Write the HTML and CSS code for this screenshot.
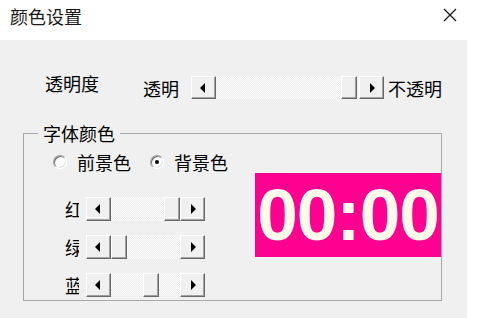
FILE: index.html
```html
<!DOCTYPE html>
<html lang="zh-CN">
<head>
    <meta charset="UTF-8">
    <title>颜色设置</title>
    <link rel="stylesheet" href="styles.css">
</head>
<body>
    <div class="window">
        <!-- Barra de título -->
        <div class="titlebar">
            <span class="title">颜色设置</span>
            <svg class="close" viewBox="0 0 14 14"><path d="M1 1L13 13M13 1L1 13" stroke="#111" stroke-width="1.2" fill="none"/></svg>
        </div>

        <div class="client">
            <!-- Transparencia -->
            <div class="opacity-row">
                <span class="opacity-label">透明度</span>
                <span class="end-label">透明</span>
                <div class="scrollbar wide">
                    <span class="sb-btn"><i class="arrow-left"></i></span>
                    <span class="sb-track"><span class="sb-thumb" style="margin-left:125px"></span></span>
                    <span class="sb-btn"><i class="arrow-right"></i></span>
                </div>
                <span class="end-label after">不透明</span>
            </div>

            <!-- Color de fuente -->
            <fieldset class="group">
                <legend>字体颜色</legend>
                <div class="group-body">
                    <div class="controls">
                        <div class="radio-row">
                            <label class="radio"><span class="radio-dot"></span>前景色</label>
                            <label class="radio"><span class="radio-dot checked"></span>背景色</label>
                        </div>
                        <div class="color-row first">
                            <span class="color-label">红</span>
                            <div class="scrollbar small">
                                <span class="sb-btn"><i class="arrow-left"></i></span>
                                <span class="sb-track"><span class="sb-thumb" style="margin-left:53px"></span></span>
                                <span class="sb-btn"><i class="arrow-right"></i></span>
                            </div>
                        </div>
                        <div class="color-row">
                            <span class="color-label">绿</span>
                            <div class="scrollbar small">
                                <span class="sb-btn"><i class="arrow-left"></i></span>
                                <span class="sb-track"><span class="sb-thumb" style="margin-left:0px"></span></span>
                                <span class="sb-btn"><i class="arrow-right"></i></span>
                            </div>
                        </div>
                        <div class="color-row">
                            <span class="color-label">蓝</span>
                            <div class="scrollbar small">
                                <span class="sb-btn"><i class="arrow-left"></i></span>
                                <span class="sb-track"><span class="sb-thumb" style="margin-left:32px"></span></span>
                                <span class="sb-btn"><i class="arrow-right"></i></span>
                            </div>
                        </div>
                    </div>
                    <div class="preview">00:00</div>
                </div>
            </fieldset>
        </div>
    </div>
</body>
</html>
```

FILE: styles.css
```css
body {
    margin: 0;
    background-color: #fff;
    font-family: "Noto Sans CJK SC", sans-serif;
    font-size: 18px;
    color: #000;
}

.window {
    width: 483px;
    height: 318px;
    display: flex;
    flex-direction: column;
}

.titlebar {
    height: 40px;
    flex-shrink: 0;
    display: flex;
    justify-content: space-between;
    align-items: flex-start;
}

.title {
    margin: 6px 0 0 10px;
    line-height: 20px;
    color: #1a1a1a;
}

.close {
    width: 14px;
    height: 14px;
    margin: 8px 26px 0 0;
}

.client {
    width: 467px;
    flex: 1;
    background-color: #f0f0f0;
    padding-top: 36px;
    box-sizing: border-box;
}

/* Fila de transparencia */
.opacity-row {
    display: flex;
    align-items: center;
    height: 23px;
}

.opacity-label {
    margin-left: 45px;
    width: 98px;
    align-self: flex-start;
    margin-top: -3px;
    line-height: 20px;
}

.end-label {
    line-height: 20px;
}

.end-label.after {
    margin-left: 4px;
}

/* Barra de desplazamiento clásica */
.scrollbar {
    display: flex;
    height: 23px;
}

.scrollbar.wide {
    width: 193px;
    margin-left: 12px;
}

.scrollbar.small {
    width: 119px;
    height: 24px;
}

.sb-btn,
.sb-thumb {
    box-sizing: border-box;
    border: 1px solid;
    border-color: #fff #696969 #696969 #fff;
    box-shadow: inset -1px -1px #a0a0a0;
    background-color: #f0f0f0;
}

.sb-btn {
    width: 25px;
    flex-shrink: 0;
    display: flex;
    align-items: center;
    justify-content: center;
}

.sb-thumb {
    width: 16px;
    height: 100%;
    flex-shrink: 0;
}

.sb-track {
    flex: 1;
    display: flex;
    background-color: #fcfcfc;
    background-image: conic-gradient(#ededed 25%, transparent 0 50%, #ededed 0 75%, transparent 0);
    background-size: 2px 2px;
}

.arrow-left,
.arrow-right {
    width: 0;
    height: 0;
    border-top: 5px solid transparent;
    border-bottom: 5px solid transparent;
}

.arrow-left {
    border-right: 5px solid #000;
    margin-left: -2px;
}

.arrow-right {
    border-left: 5px solid #000;
    margin-right: -2px;
}

/* Grupo de color */
.group {
    margin: 24px 0 0 23px;
    width: 419px;
    height: 178px;
    box-sizing: border-box;
    border: 1px solid #a8a8a8;
    padding: 0;
}

.group legend {
    margin-left: 14px;
    padding: 0 5px;
    line-height: 20px;
}

.group-body {
    display: flex;
}

.controls {
    padding-left: 29px;
}

.radio-row {
    display: flex;
    align-items: center;
    gap: 19px;
    height: 20px;
    margin-top: 9px;
}

.radio {
    display: flex;
    align-items: center;
    gap: 10px;
    line-height: 20px;
}

.radio-dot {
    width: 14px;
    height: 14px;
    box-sizing: border-box;
    border-radius: 50%;
    border: 1px solid;
    border-color: #a0a0a0 #fff #fff #a0a0a0;
    box-shadow: inset 1px 1px #696969, inset -1px -1px #e3e3e3;
    background-color: #fff;
    display: flex;
    align-items: center;
    justify-content: center;
}

.radio-dot.checked::after {
    content: "";
    width: 4px;
    height: 4px;
    border-radius: 50%;
    background-color: #000;
}

.color-row {
    display: flex;
    align-items: center;
    margin-top: 14px;
    margin-left: 12px;
}

.color-row.first {
    margin-top: 25px;
}

/* las etiquetas salen recortadas, igual que en la ventana original */
.color-label {
    width: 14px;
    margin-right: 7px;
    overflow: hidden;
    white-space: nowrap;
    line-height: 20px;
}

.preview {
    margin: 30px 0 0 auto;
    width: 186px;
    height: 84px;
    background-color: #ff0090;
    color: #fffbe8;
    font-family: "Liberation Sans", Arial, sans-serif;
    font-weight: bold;
    font-size: 73px;
    letter-spacing: -1px;
    line-height: 84px;
    text-align: center;
    white-space: nowrap;
    overflow: hidden;
}
```
